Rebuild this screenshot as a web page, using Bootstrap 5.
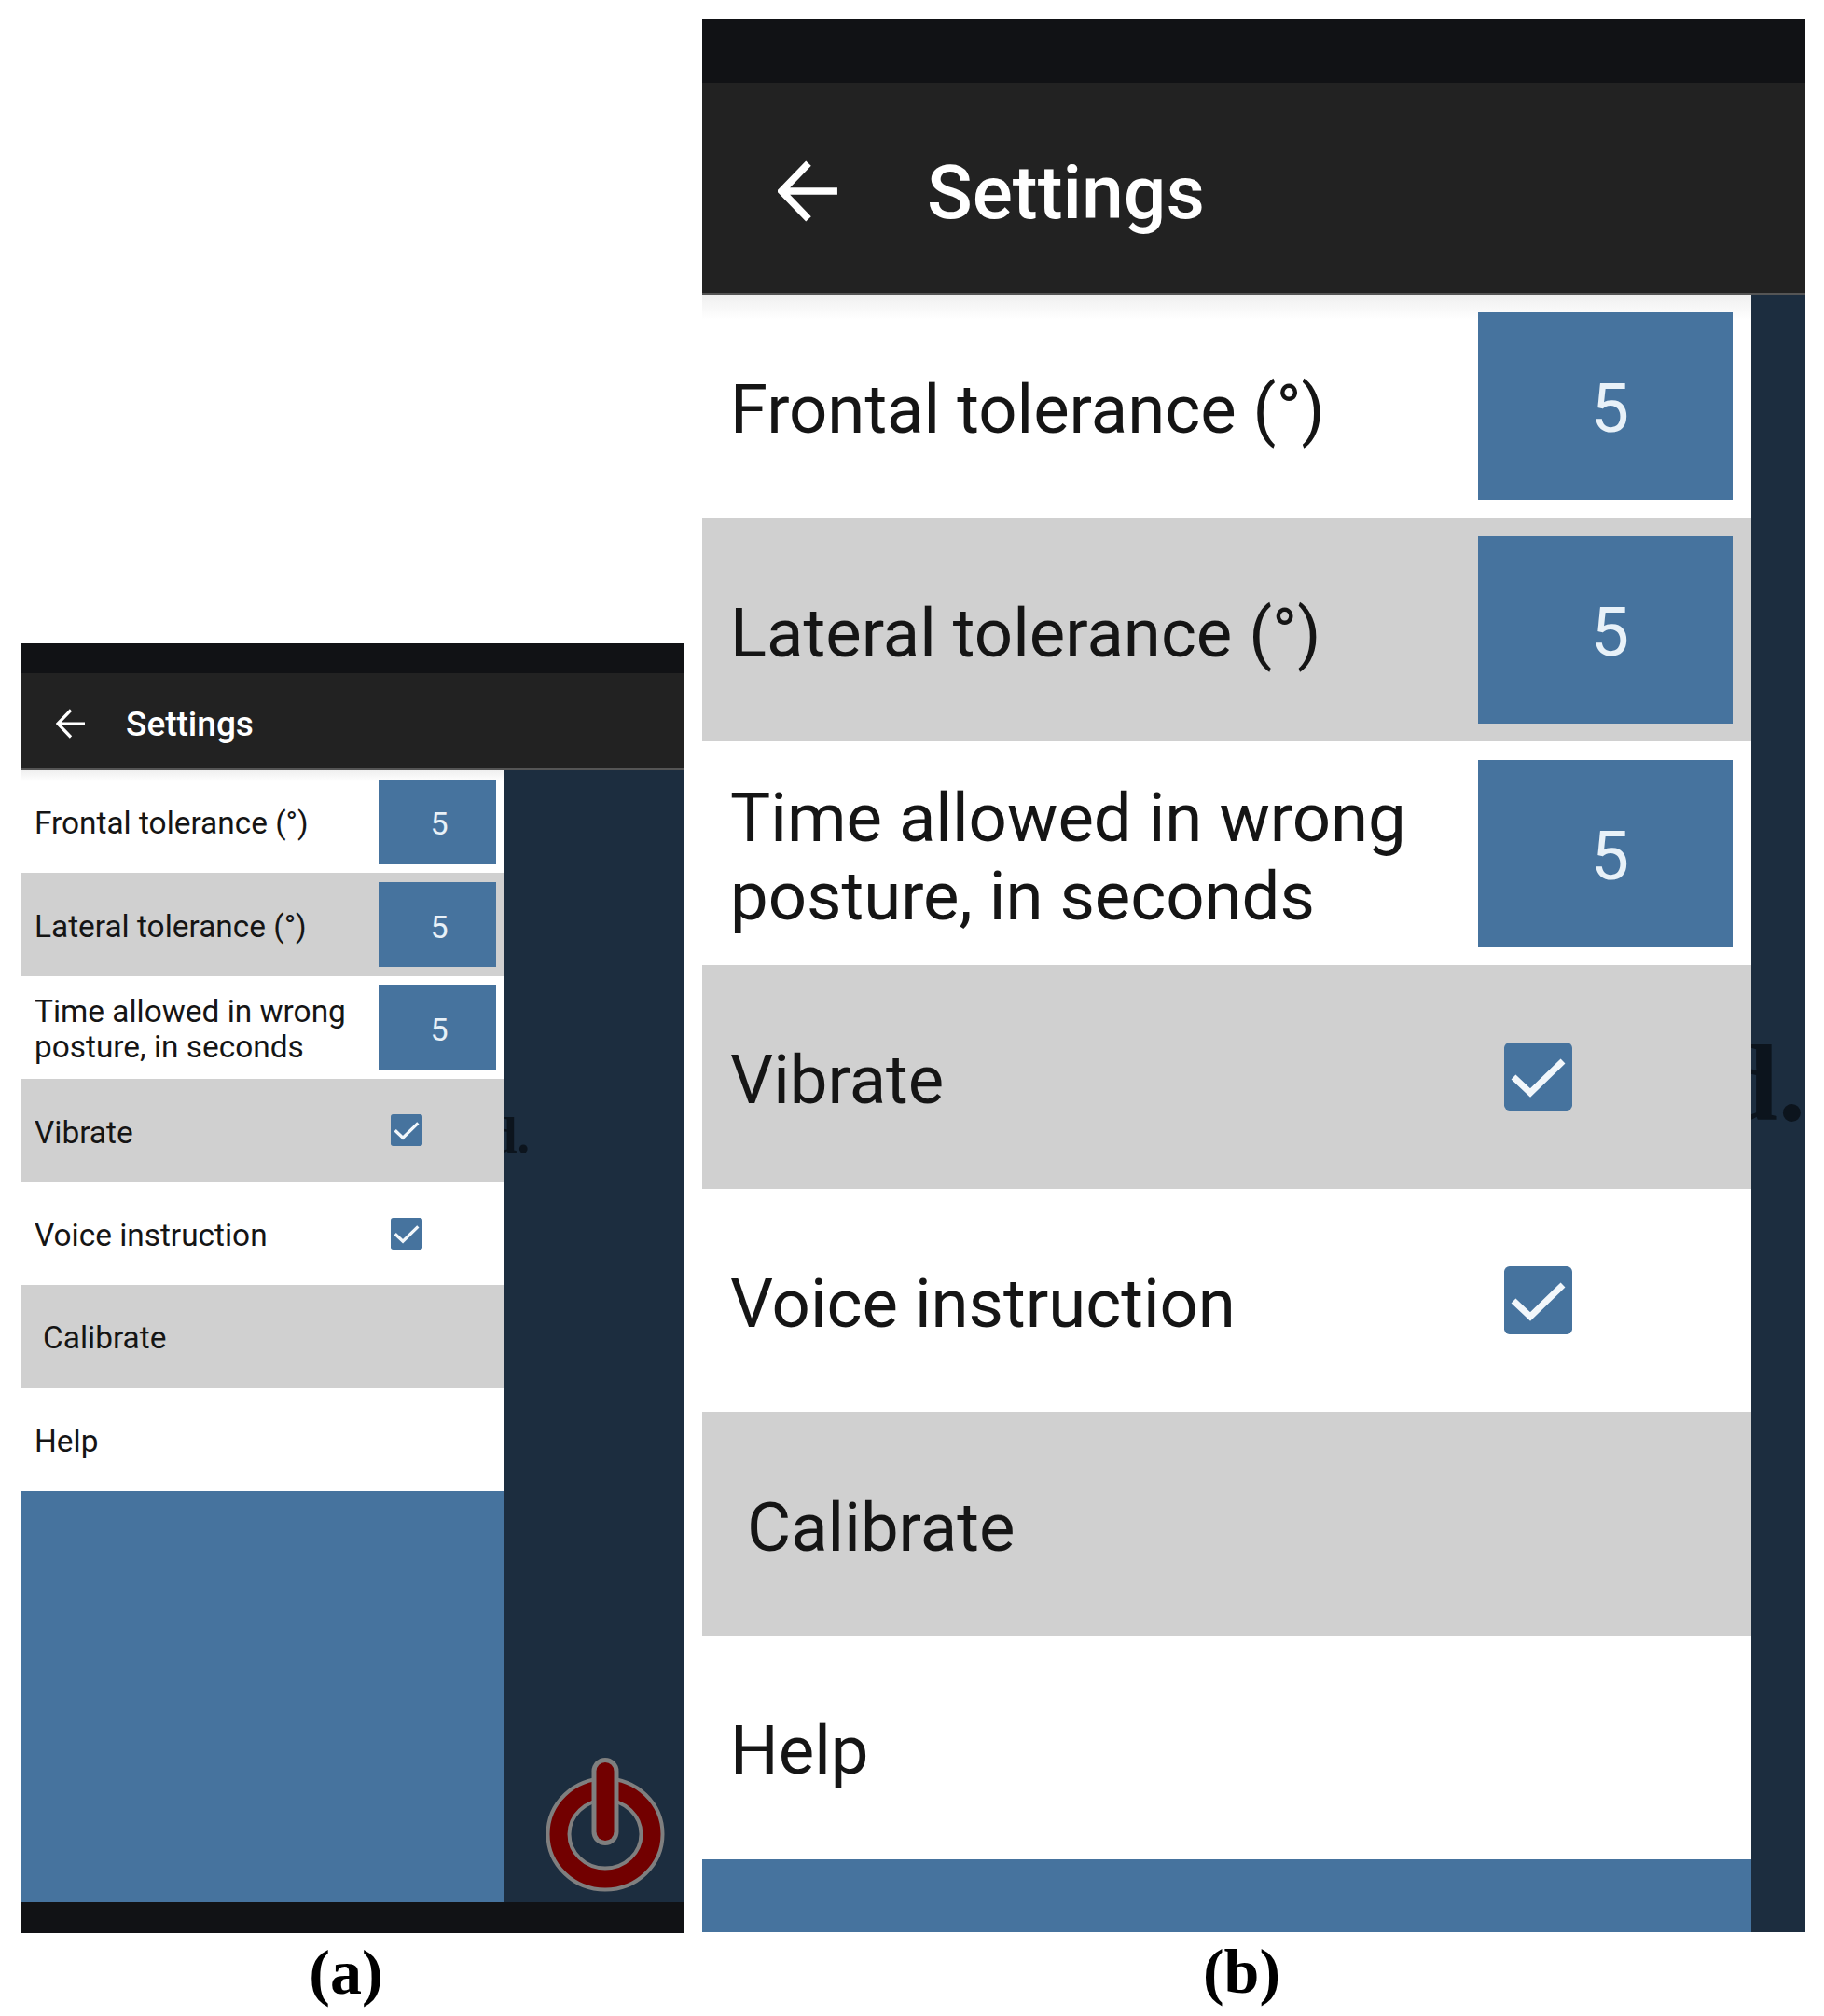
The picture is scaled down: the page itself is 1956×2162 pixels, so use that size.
<!DOCTYPE html>
<html lang="en">
<head>
<meta charset="utf-8">
<title>Settings</title>
<link href="https://cdn.jsdelivr.net/npm/bootstrap@5.3.0/dist/css/bootstrap.min.css" rel="stylesheet">
<style>
html,body{height:2162px;overflow:hidden;background:#fff;}
.fig-wrap{height:2162px;padding:20px 20px 0 23px;gap:20px;}
.fig-col-a{width:710px;--fs:33.4px;--lh:38.6px;--title:37px;--rowh:110.4px;--pl:14px;--slot:135px;--inw:126px;--inh:91px;--five:34px;--cbx:34px;--cbml:13px;--cal:9px;--top:32px;--app:104px;--rail:192px;--arrow:32px;--arrowgap:43px;--apppl:37px;--paneh:1383px;--dsize:54px;--tp:0px;--txp:5px;--nump:4px;--numl:4px;--capb:81px;--as:6.500;}
.fig-col-b{width:1183px;--fs:72.500px;--lh:84px;--title:80.500px;--rowh:239.7px;--pl:30px;--slot:293px;--inw:273px;--inh:201px;--five:73px;--cbx:73px;--cbml:28px;--cal:18px;--top:69px;--app:227px;--rail:58px;--arrow:66px;--arrowgap:94px;--apppl:81px;--paneh:2052px;--dsize:117px;--tp:6px;--txp:9px;--nump:6px;--numl:10px;--capb:76px;--as:7.500;}
.phone{height:var(--paneh);background:#1c2d3f;font-family:Roboto,"Liberation Sans",sans-serif;}
.status-strip{height:var(--top);background:#111215;flex:none;}
.status-strip.foot{height:33px;}
.app-head{height:var(--app);background:#222;color:#fff;padding:6px 0 0 var(--apppl);gap:var(--arrowgap);flex:none;border-bottom:2px solid #555;}
.app-head svg{width:var(--arrow);height:var(--arrow);flex:none;stroke-width:var(--as);}
.head-title{font-size:var(--title);font-weight:500;line-height:1;padding-top:var(--tp);}
.main-area{min-height:0;position:relative;}
.drawer-pane{background:#46739e;position:relative;z-index:2;}
.drawer-pane .list-group-item{height:var(--rowh);padding:0 0 0 var(--pl);border:0;border-radius:0;background:#fff;color:#151515;font-size:var(--fs);line-height:var(--lh);flex:none;}
.drawer-pane .list-group-item.row-grey{background:#d0d0d0;}
.drawer-pane .list-group-item.row-first{background:linear-gradient(#efefef,#fff 11%);}
.row-text{flex:1;min-width:0;padding-top:var(--txp);}
.row-text.btn-text{padding-left:var(--cal);}
.row-slot{width:var(--slot);flex:none;}
.num-box{width:var(--inw);height:var(--inh);background:#46739e;color:#e8f1f8;font-size:var(--five);line-height:1;padding-left:var(--numl);padding-top:var(--nump);}
.tick-box{width:var(--cbx);height:var(--cbx);margin-left:var(--cbml);background:#46739e;border-radius:8%;display:block;}
.nav-rail{width:var(--rail);flex:none;}
.behind-text{position:absolute;right:0;font-family:"Liberation Serif",serif;font-weight:700;color:#0c141d;font-size:var(--dsize);line-height:1;z-index:1;}
.fig-col-a .behind-text{top:365px;right:165px;}
.fig-col-b .behind-text{top:787px;right:0;}
.power-mark{position:absolute;left:556px;top:1059px;width:140px;height:150px;z-index:3;}
.fig-caption{font-family:"Liberation Serif",serif;font-weight:700;font-size:68px;line-height:1;color:#000;text-align:center;margin-top:8px;height:var(--capb);}
.fig-col-a .fig-caption{padding-right:14px;}
.fig-col-b .fig-caption{padding-right:26px;}
</style>
</head>
<body>
<div class="d-flex align-items-start fig-wrap">

  <div class="fig-col-a mt-auto">
    <div class="phone d-flex flex-column">
      <div class="status-strip"></div>
      <div class="app-head d-flex align-items-center">
        <svg viewBox="0 0 64 64" fill="none" stroke="#fff"><path d="M62 32H5M32 3 4 32l28 29"/></svg>
        <span class="head-title">Settings</span>
      </div>
      <div class="main-area d-flex flex-grow-1">
        <div class="drawer-pane flex-grow-1 d-flex flex-column">
          <div class="list-group list-group-flush">
            <div class="list-group-item row-first d-flex align-items-center"><span class="row-text">Frontal tolerance (°)</span><span class="row-slot"><span class="num-box d-flex align-items-center justify-content-center">5</span></span></div>
            <div class="list-group-item row-grey d-flex align-items-center"><span class="row-text">Lateral tolerance (°)</span><span class="row-slot"><span class="num-box d-flex align-items-center justify-content-center">5</span></span></div>
            <div class="list-group-item d-flex align-items-center"><span class="row-text">Time allowed in wrong posture, in seconds</span><span class="row-slot"><span class="num-box d-flex align-items-center justify-content-center">5</span></span></div>
            <div class="list-group-item row-grey d-flex align-items-center"><span class="row-text">Vibrate</span><span class="row-slot"><svg class="tick-box" viewBox="0 0 73 73" fill="none" stroke="#f2f7fb" stroke-width="7"><path d="M10 37 28 54 63 20"/></svg></span></div>
            <div class="list-group-item d-flex align-items-center"><span class="row-text">Voice instruction</span><span class="row-slot"><svg class="tick-box" viewBox="0 0 73 73" fill="none" stroke="#f2f7fb" stroke-width="7"><path d="M10 37 28 54 63 20"/></svg></span></div>
            <div class="list-group-item row-grey d-flex align-items-center"><span class="row-text btn-text">Calibrate</span></div>
            <div class="list-group-item d-flex align-items-center"><span class="row-text">Help</span></div>
          </div>
        </div>
        <div class="nav-rail"></div>
        <span class="behind-text">d.</span>
        <svg class="power-mark" viewBox="0 0 140 150" fill="none">
          <ellipse cx="70" cy="82" rx="50" ry="48" stroke="#7f7f7f" stroke-width="27"/>
          <ellipse cx="70" cy="82" rx="50" ry="48" stroke="#720000" stroke-width="19"/>
          <path d="M70 14.500V79.500" stroke="#7f7f7f" stroke-width="29" stroke-linecap="round"/>
          <path d="M70 14.500V79.500" stroke="#720000" stroke-width="19" stroke-linecap="round"/>
        </svg>
      </div>
      <div class="status-strip foot"></div>
    </div>
    <div class="fig-caption">(a)</div>
  </div>

  <div class="fig-col-b">
    <div class="phone d-flex flex-column">
      <div class="status-strip"></div>
      <div class="app-head d-flex align-items-center">
        <svg viewBox="0 0 64 64" fill="none" stroke="#fff"><path d="M62 32H5M32 3 4 32l28 29"/></svg>
        <span class="head-title">Settings</span>
      </div>
      <div class="main-area d-flex flex-grow-1">
        <div class="drawer-pane flex-grow-1 d-flex flex-column">
          <div class="list-group list-group-flush">
            <div class="list-group-item row-first d-flex align-items-center"><span class="row-text">Frontal tolerance (°)</span><span class="row-slot"><span class="num-box d-flex align-items-center justify-content-center">5</span></span></div>
            <div class="list-group-item row-grey d-flex align-items-center"><span class="row-text">Lateral tolerance (°)</span><span class="row-slot"><span class="num-box d-flex align-items-center justify-content-center">5</span></span></div>
            <div class="list-group-item d-flex align-items-center"><span class="row-text">Time allowed in wrong posture, in seconds</span><span class="row-slot"><span class="num-box d-flex align-items-center justify-content-center">5</span></span></div>
            <div class="list-group-item row-grey d-flex align-items-center"><span class="row-text">Vibrate</span><span class="row-slot"><svg class="tick-box" viewBox="0 0 73 73" fill="none" stroke="#f2f7fb" stroke-width="7"><path d="M10 37 28 54 63 20"/></svg></span></div>
            <div class="list-group-item d-flex align-items-center"><span class="row-text">Voice instruction</span><span class="row-slot"><svg class="tick-box" viewBox="0 0 73 73" fill="none" stroke="#f2f7fb" stroke-width="7"><path d="M10 37 28 54 63 20"/></svg></span></div>
            <div class="list-group-item row-grey d-flex align-items-center"><span class="row-text btn-text">Calibrate</span></div>
            <div class="list-group-item d-flex align-items-center"><span class="row-text">Help</span></div>
          </div>
        </div>
        <div class="nav-rail"></div>
        <span class="behind-text">d.</span>
      </div>
    </div>
    <div class="fig-caption">(b)</div>
  </div>
</div>
<script src="https://cdn.jsdelivr.net/npm/bootstrap@5.3.0/dist/js/bootstrap.bundle.min.js"></script>
</body>
</html>
